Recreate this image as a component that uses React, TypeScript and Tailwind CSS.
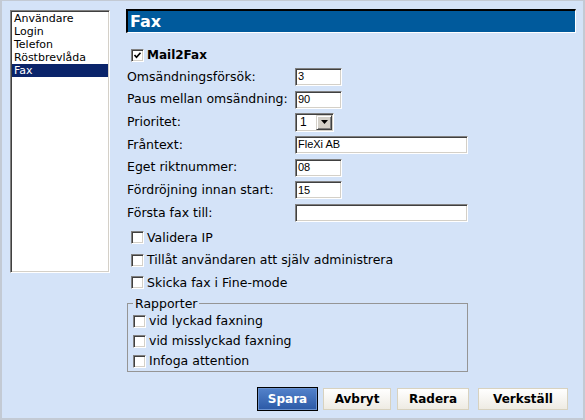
import React from 'react';

const inset =
  'border border-t-[#808080] border-l-[#808080] border-b-white border-r-white shadow-[inset_1px_1px_0_#404040,inset_-1px_-1px_0_#d4d0c8]';

function CheckBox({ checked = false }: { checked?: boolean }) {
  return (
    <span className={`flex items-center justify-center w-[13px] h-[13px] shrink-0 bg-white ${inset}`}>
      {checked && (
        <svg width="9" height="9" viewBox="0 0 9 9">
          <polyline points="1.5,4 3.5,6.2 7.5,1.8" fill="none" stroke="#000" strokeWidth="1.7" />
        </svg>
      )}
    </span>
  );
}

function TextBox({ value = '', wide = false }: { value?: string; wide?: boolean }) {
  return (
    <div
      className={`h-[18px] ${wide ? 'w-[173px]' : 'w-[47px]'} bg-white ${inset} flex items-center pl-[2px] text-[11px] leading-none text-black`}
      style={{ fontFamily: '"Liberation Sans", Arial, sans-serif' }}
    >
      {value}
    </div>
  );
}

function Select() {
  return (
    <div className={`h-[19px] w-[39px] bg-white ${inset} flex items-center p-[1px]`}>
      <span
        className="flex-1 pl-[3px] text-[12px] leading-none text-black"
        style={{ fontFamily: '"Liberation Sans", Arial, sans-serif' }}
      >
        1
      </span>
      <span className="w-[16px] h-[15px] bg-[#d4d0c8] border border-t-[#d4d0c8] border-l-[#d4d0c8] border-b-[#404040] border-r-[#404040] shadow-[inset_1px_1px_0_#fff,inset_-1px_-1px_0_#808080] flex items-center justify-center">
        <svg width="7" height="4" viewBox="0 0 7 4">
          <polygon points="0,0 7,0 3.5,4" fill="#000" />
        </svg>
      </span>
    </div>
  );
}

const rows: { label: string; field: React.ReactNode }[] = [
  { label: 'Omsändningsförsök:', field: <TextBox value="3" /> },
  { label: 'Paus mellan omsändning:', field: <TextBox value="90" /> },
  { label: 'Prioritet:', field: <Select /> },
  { label: 'Fråntext:', field: <TextBox value="FleXi AB" wide /> },
  { label: 'Eget riktnummer:', field: <TextBox value="08" /> },
  { label: 'Fördröjning innan start:', field: <TextBox value="15" /> },
  { label: 'Första fax till:', field: <TextBox wide /> },
];

const menu = ['Användare', 'Login', 'Telefon', 'Röstbrevlåda', 'Fax'];

export default function App() {
  return (
    <div
      className="w-[585px] h-[420px] box-border bg-[#d4e3f8] border-l-2 border-r-2 border-t border-b-2 border-[#c3cad4] flex text-black overflow-hidden"
      style={{ fontFamily: '"DejaVu Sans", Verdana, sans-serif' }}
    >
      {/* side list */}
      <div className={`mt-[9px] ml-[8px] w-[100px] h-[263px] shrink-0 bg-white ${inset} pt-[1px] px-[1px]`}>
        {menu.map((m) => (
          <div
            key={m}
            className={`h-[13px] leading-[13px] px-[2px] text-[11px] ${m === 'Fax' ? 'bg-[#0a246a] text-white' : ''}`}
          >
            {m}
          </div>
        ))}
      </div>

      {/* form */}
      <div className="ml-[16px] flex-1 flex flex-col">
        <div className="mt-[8px] w-[450px] h-[24px] bg-[#005a9c] border-t-2 border-l-2 border-r border-b border-t-black border-l-black border-r-white border-b-white flex items-center pl-[2px]">
          <span className="text-white font-bold text-[16px] leading-none">Fax</span>
        </div>

        <div className="pl-[1px]">
          <div className="mt-[12px] h-[20.67px] flex items-center gap-[3px] pl-[4px]">
            <CheckBox checked />
            <span className="font-bold text-[12px]">Mail2Fax</span>
          </div>

          {rows.map((r) => (
            <div key={r.label} className="h-[22.67px] flex items-center">
              <span className="w-[168px] shrink-0 text-[12.5px] leading-none">{r.label}</span>
              {r.field}
            </div>
          ))}

          <div className="mt-[2.4px]">
            {['Validera IP', 'Tillåt användaren att själv administrera', 'Skicka fax i Fine-mode'].map((t) => (
              <div key={t} className="h-[22.5px] flex items-center gap-[3px] pl-[4px]">
                <CheckBox />
                <span className="text-[12.5px] leading-none">{t}</span>
              </div>
            ))}
          </div>

          <fieldset className="mt-[2px] w-[341px] border border-[#959595] px-[5px] pb-0">
            <legend className="px-[2px] text-[12.5px] leading-[15px]">Rapporter</legend>
            {['vid lyckad faxning', 'vid misslyckad faxning', 'Infoga attention'].map((t) => (
              <div key={t} className="h-[20px] flex items-center gap-[3px]">
                <CheckBox />
                <span className="text-[12.5px] leading-none">{t}</span>
              </div>
            ))}
          </fieldset>

          <div className="mt-[15px] ml-[130px] flex items-center">
            <button className="w-[61px] h-[24px] border border-black bg-gradient-to-b from-[#5483cb] to-[#2b59a6] text-white font-bold text-[12px] shadow-[inset_0_0_0_1px_#6a92d0]">
              Spara
            </button>
            <button className="ml-[5px] w-[68px] h-[22px] border border-[#d8d2bf] bg-gradient-to-b from-white to-[#eeebe3] font-bold text-[12px]">
              Avbryt
            </button>
            <button className="ml-[6px] w-[72px] h-[22px] border border-[#d8d2bf] bg-gradient-to-b from-white to-[#eeebe3] font-bold text-[12px]">
              Radera
            </button>
            <button className="ml-[9px] w-[90px] h-[22px] border border-[#d8d2bf] bg-gradient-to-b from-white to-[#eeebe3] font-bold text-[12px]">
              Verkställ
            </button>
          </div>
        </div>
      </div>
    </div>
  );
}
